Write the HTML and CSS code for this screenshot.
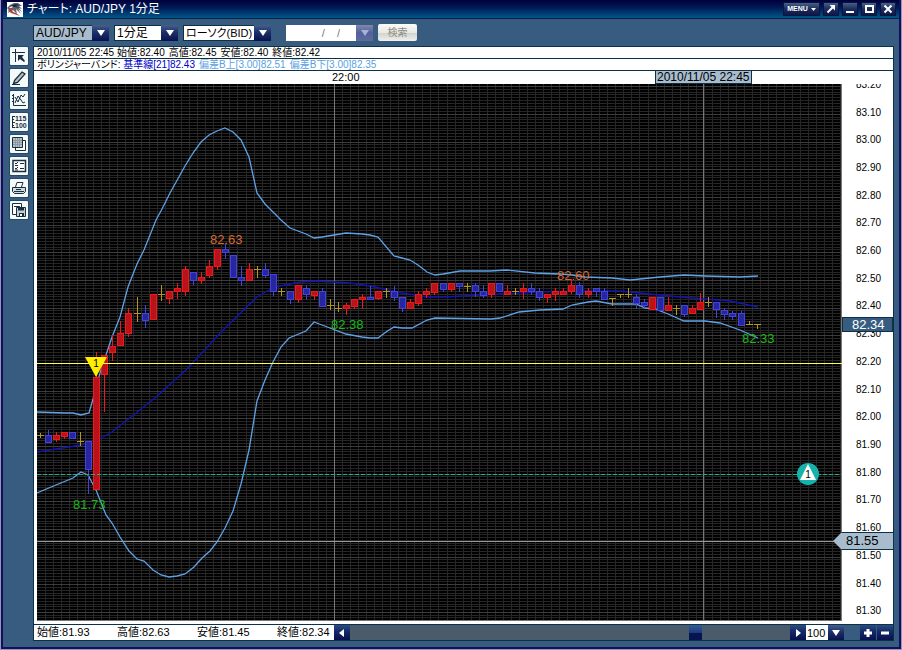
FILE: index.html
```html
<!DOCTYPE html>
<html lang="ja">
<head>
<meta charset="utf-8">
<title>チャート: AUD/JPY 1分足</title>
<link rel="stylesheet" href="styles.css">
</head>
<body>
<div class="window">
  <header class="titlebar">
    <svg class="logo" viewBox="0 0 16 15" aria-hidden="true">
      <rect width="16" height="15" fill="#fff"/>
      <path d="M0 6 3 3 7 1l4 0 4 3-3 0 3 3-3-1 3 4-4-3 3 5-5-5 1 5-4-4-2 1-3 2 1-3z" fill="#5b6672"/>
      <path d="M3 4 8 2l5 1-4 1 4 2-5-1-3 0z" fill="#232a36"/>
      <path d="M1 8l3-2 3 1-2 1 1 2 3 1 4 3-6-2-3-1z" fill="#a8433f"/>
      <path d="M2 6l3-2 1 1-2 1z" fill="#fff"/>
    </svg>
    <h1>チャート: AUD/JPY 1分足</h1>
    <div class="window-buttons">
      <button class="chrome menu" type="button">MENU<svg viewBox="0 0 5 3" width="5" height="3" aria-hidden="true"><path d="M0 0h5L2.500 3z" fill="#fff"/></svg></button>
      <button class="chrome" type="button" aria-label="切り離し"><svg viewBox="0 0 14 12" aria-hidden="true"><path d="M3.500 9.500 9 4" stroke="#fff" stroke-width="2"/><path d="M5.500 2H11v5.500z" fill="#fff"/></svg></button>
      <button class="chrome" type="button" aria-label="最小化"><svg viewBox="0 0 14 12" aria-hidden="true"><path d="M3 8h8v2H3z" fill="#fff"/></svg></button>
      <button class="chrome" type="button" aria-label="最大化"><svg viewBox="0 0 14 12" aria-hidden="true"><path d="M4 3h7v6H4z" fill="none" stroke="#fff" stroke-width="2"/></svg></button>
      <button class="chrome" type="button" aria-label="閉じる"><svg viewBox="0 0 14 12" aria-hidden="true"><path d="m3.500 2.500 7 7m0-7-7 7" stroke="#fff" stroke-width="2"/></svg></button>
    </div>
  </header>

  <form class="controls">
    <label class="picker pair"><select aria-label="通貨ペア"><option>AUD/JPY</option></select><span class="drop"></span></label>
    <label class="picker span"><select aria-label="足種"><option>1分足</option></select><span class="drop"></span></label>
    <label class="picker style"><select aria-label="チャート種類"><option>ローソク(BID)</option></select><span class="drop"></span></label>
    <div class="date">
      <input type="text" aria-label="日付" value="/    /" disabled>
      <button class="drop faded" type="button" aria-label="カレンダー" disabled></button>
    </div>
    <button class="search" type="button" disabled>検索</button>
  </form>

  <main class="body">
    <nav class="tools" aria-label="描画ツール">
      <button type="button" aria-label="カーソル"><svg viewBox="0 0 18 18"><path d="M2 5.500h13M5.500 2v13" stroke="#17303f" fill="none"/><path d="M8 8h6l-2 2 3 4-1 1-4-3-2 2z" fill="#17303f"/></svg></button>
      <button type="button" aria-label="描画"><svg viewBox="0 0 18 18"><path d="M4.500 11.500 12 3l3 2-7.500 8.500-4 1z" fill="#b4c0c8" stroke="#17303f" stroke-width="1.300"/><path d="M2 15.500h8" stroke="#17303f"/></svg></button>
      <button type="button" aria-label="テクニカル"><svg viewBox="0 0 18 18"><path d="M3.500 3v11.500H16M2 4.500h2M2 7.500h2M2 10.500h2" stroke="#17303f" fill="none"/><path d="m5 12 3-7 3 4 2 3 2-1M5 6l3 5 3-7 2 2 2-3" stroke="#17303f" fill="none"/></svg></button>
      <button type="button" aria-label="価格目盛"><svg viewBox="0 0 18 18"><path d="M2.500 3v12M2 3.500h3M2 6.500h2M2 9.500h3M2 12.500h2M2 14.500h3" stroke="#17303f" fill="none"/><text x="5" y="8">115</text><text x="5" y="15">100</text></svg></button>
      <button type="button" aria-label="重ね表示"><svg viewBox="0 0 18 18"><path d="M5.500 5.500h10v10h-10z" fill="#fff" stroke="#17303f"/><path d="M2.500 2.500h10v10h-10z" fill="#b9c3c9" stroke="#17303f"/><path d="M3 5.500h9M3 7.500h9M3 9.500h9M5.500 3v9M7.500 3v9M9.500 3v9" stroke="#8b99a2"/></svg></button>
      <button type="button" aria-label="設定"><svg viewBox="0 0 18 18"><path d="M3 3.500h12.500v11H3z" fill="#fff" stroke="#17303f" stroke-width="1.500"/><path d="m5 6 1 1 2-2M5 11l1 1 2-2M10 6.500h4M10 11.500h4M5 8.500h3M5 13h3" stroke="#17303f" fill="none"/></svg></button>
      <button type="button" aria-label="印刷"><svg viewBox="0 0 18 18"><path d="M5.500 8 7 3.500h6L11.500 8" fill="#fff" stroke="#17303f"/><path d="M2.500 8.500h13v4l-2 2h-9l-2-2z" fill="#d4dbe0" stroke="#17303f"/><path d="M4 12.500h10M6 10.500h5" stroke="#17303f"/></svg></button>
      <button type="button" aria-label="保存"><svg viewBox="0 0 18 18"><path d="M2.500 2.500h9v11h-9zM4 5.500h6" fill="#fff" stroke="#17303f"/><path d="M6.500 6.500h9v9h-9z" fill="#c4ced4" stroke="#17303f"/><path d="M8 6.500h6v3H8zM9 12h5v3H9z" fill="#17303f"/><path d="M10 13h2v2h-2z" fill="#fff"/></svg></button>
    </nav>

    <section class="panel">
      <p class="info">2010/11/05 22:45 <span>始値:82.40</span><span>高値:82.45</span><span>安値:82.40</span><span>終値:82.42</span></p>
      <p class="info">ボリンジャーバンド: <span class="base">基準線[21]82.43</span><span class="band">偏差B上[3.00]82.51</span><span class="band">偏差B下[3.00]82.35</span></p>
      <div class="chart">
        <div class="times">
          <span class="hour">22:00</span>
          <time class="cursor-time">2010/11/05 22:45</time>
        </div>
        <svg class="plot" id="plot" viewBox="37 84 805 537" role="img" aria-label="AUD/JPY ローソク足">
          <rect x="37" y="84" width="805" height="537" fill="#000"/>
        </svg>
        <div class="scale">
          <ol class="prices" id="prices"></ol>
          <output class="last">82.34</output>
          <output class="pointer">81.55</output>
        </div>
      </div>
      <footer class="status">
        <div class="values"><span>始値:81.93</span><span>高値:82.63</span><span>安値:81.45</span><span>終値:82.34</span></div>
        <button class="step" type="button" aria-label="前へ"><svg viewBox="0 0 16 15"><path d="M10 4v8L5 8z" fill="#fff"/></svg></button>
        <input class="scroll" type="range" aria-label="表示位置" min="0" max="1000" value="794">
        <button class="step" type="button" aria-label="次へ"><svg viewBox="0 0 16 15"><path d="M6 4v8l5-4z" fill="#fff"/></svg></button>
        <label class="picker count"><select aria-label="表示本数"><option>100</option></select><span class="drop"></span></label>
        <button class="step zoom" type="button" aria-label="拡大"><svg viewBox="0 0 16 15"><path d="M8 4v8M4 8h8" stroke="#fff" stroke-width="3"/></svg></button>
        <button class="step" type="button" aria-label="縮小"><svg viewBox="0 0 16 15"><path d="M4 8h8" stroke="#fff" stroke-width="3"/></svg></button>
      </footer>
    </section>
  </main>
</div>
<script src="chart.js"></script>
</body>
</html>
```
FILE: styles.css
```css
* { box-sizing: border-box; }

body {
  margin: 0;
  background: #385c80;
  color: #000;
  font: 11px/15px "Liberation Sans", "Noto Sans CJK JP", sans-serif;
  font-feature-settings: "palt";
}

button, select, input { font: inherit; color: inherit; margin: 0; padding: 0; border: 0; border-radius: 0; }
p, h1, ol { margin: 0; padding: 0; }
svg { display: block; }

.window {
  border: 1px solid #9496bc;
  border-top: 0;
  box-shadow: inset 2px 0 #10105c, inset -2px 0 #10105c, inset 0 -2px #10105c;
  padding: 0 2px 2px;
  background: #385c80;
}

/* title bar */
.titlebar {
  display: flex;
  align-items: center;
  height: 19px;
  padding: 0 4px;
  border-bottom: 1px solid #06204c;
  background: linear-gradient(#00003c, #001c58 45%, #005888);
  color: #fff;
}
.logo { width: 16px; height: 15px; }
.titlebar h1 { flex: 1; margin-left: 4px; font-size: 12px; font-weight: 400; line-height: 18px; }
.window-buttons { display: flex; gap: 5px; }
.chrome {
  width: 14px;
  height: 12px;
  background: linear-gradient(#456088, #1c2c5c 50%, #0c1848);
  box-shadow: 0 0 0 1px #0a1440;
}
.menu {
  display: flex;
  align-items: center;
  justify-content: center;
  gap: 3px;
  width: 35px;
  font-size: 7px;
  font-weight: 700;
  line-height: 12px;
}

/* controls row */
.controls { display: flex; align-items: center; gap: 5px; height: 27px; padding-left: 30px; }
.picker { display: grid; height: 16px; }
.picker > * { grid-area: 1 / 1; }
.picker select {
  appearance: none;
  width: 100%;
  padding-left: 2px;
  border: 1px solid #0c3048;
  background: #fff;
  font-size: 12px;
  line-height: 14px;
}
.drop {
  display: grid;
  place-items: center;
  justify-self: end;
  width: 17px;
  height: 16px;
  background: linear-gradient(#44608c, #1c2f6c 45%, #08124c);
  pointer-events: none;
}
.drop::after {
  content: "";
  border: solid transparent;
  border-width: 6px 4px 0;
  border-top-color: #fff;
}
.pair { width: 76px; }
.pair select { background: #a9bccd; }
.span { width: 64px; }
.style { width: 88px; }
.picker.style select { font-size: 11px; }
.date { display: flex; margin-left: 10px; }
.date input { width: 70px; height: 16px; padding-right: 16px; background: #fff; color: #777; text-align: right; white-space: pre; }
.faded { background: linear-gradient(#8088ac, #52609c 50%, #5c6c9c); }
.faded::after { border-top-color: #a4b4d4; }
.search {
  width: 39px;
  height: 17px;
  border-radius: 2px;
  background: linear-gradient(#fafafa, #e8e8e4 50%, #d2d2cc 52%, #f0f0ec);
  color: #8c8c84;
  font-size: 10px;
}

/* tools and chart panel */
.body { display: flex; gap: 5px; padding: 0 5px 6px 7px; }
.tools { display: flex; flex-direction: column; gap: 4px; padding-top: 1px; }
.tools button { width: 18px; height: 18px; border-radius: 1px; background: #f6f9fa; box-shadow: 0 0 0 1px #234a68; }
.tools text { font: 700 7px "Liberation Sans", sans-serif; fill: #17303f; }

.panel { flex: 1; min-width: 0; border: 1px solid #0c3048; background: #fff; }
.info { height: 12px; padding-left: 3px; border-bottom: 1px solid #0c3048; font-size: 10px; line-height: 11px; white-space: nowrap; overflow: hidden; }
.info span { margin-right: 4px; }
.info .base { color: #0000c8; }
.info .band { color: #5a9fe0; }

.chart {
  display: grid;
  grid-template-columns: 1fr 51px;
  grid-template-rows: 13px auto;
  padding: 0 0 3px 3px;
}
.times { grid-column: 1 / 3; position: relative; line-height: 13px; }
.hour { position: absolute; left: 295px; }
.cursor-time {
  position: absolute;
  left: 618px;
  padding: 0 1px;
  border: 1px solid #0c3048;
  border-top: 0;
  background: #a9bccd;
  font-size: 12px;
  line-height: 12px;
}
.plot { width: 100%; height: auto; }
.plot text { font: 13px "Liberation Sans", sans-serif; }
.plot .badge { font-size: 10px; text-anchor: middle; }
.scale { position: relative; }
.prices { position: absolute; inset: 0; overflow: hidden; list-style: none; display: flex; flex-direction: column; }
.prices li { flex: 1 0 0; display: flex; align-items: center; padding-left: 14px; font-size: 10px; line-height: 10px; }
.prices li:first-child { margin-top: -13px; }
.prices li:last-child { margin-bottom: -4px; }
.last, .pointer { position: absolute; right: 0; font-size: 13px; }
.last {
  top: 233px;
  width: 51px;
  height: 15px;
  padding-left: 9px;
  border: 1px solid #0c3048;
  background: #385c80;
  color: #fff;
  line-height: 13px;
}
.pointer {
  top: 448px;
  width: 60px;
  height: 18px;
  padding-left: 13px;
  background: linear-gradient(#0c3048 1px, #a9bccd 1px, #a9bccd 17px, #0c3048 17px);
  clip-path: polygon(0 50%, 9px 0, 100% 0, 100% 100%, 9px 100%);
  line-height: 18px;
}

/* status bar */
.status { display: flex; height: 16px; border-top: 1px solid #0c3048; background: #385c80; }
.values { display: grid; grid-template-columns: repeat(3, 80px) 57px; padding-left: 3px; background: #fff; white-space: nowrap; }
.step { width: 16px; height: 15px; background: linear-gradient(#2c4c80, #142868 45%, #08104c); }
.scroll { appearance: none; flex: 1; min-width: 0; height: 15px; background: #4a5c6c; }
.scroll::-webkit-slider-thumb { appearance: none; width: 13px; height: 15px; background: linear-gradient(#345c94, #1c3c80 50%, #081450 55%); }
.count { width: 38px; height: 15px; }
.picker.count select { padding-left: 1px; border: 0; font-size: 11px; }
.count .drop { width: 16px; height: 15px; }
.zoom { margin: 0 1px 0 16px; }
```
FILE: chart.js
```js
const SVG = "http://www.w3.org/2000/svg";
const plot = document.getElementById("plot");
const LEFT = 37, RIGHT = 842, TOP = 84, BOTTOM = 621;
const STEP = 8.04;

function add(name, attrs, text) {
  const el = document.createElementNS(SVG, name);
  for (const key in attrs) el.setAttribute(key, attrs[key]);
  if (text) el.textContent = text;
  plot.appendChild(el);
}
const priceY = p => 612.4 - (p - 81.3) * 276.7;
const line = (x1, y1, x2, y2, stroke, extra) =>
  add("path", Object.assign({ d: `M${x1} ${y1}L${x2} ${y2}`, stroke, fill: "none" }, extra));

// Grid: one column per bar, one row per 0.01
for (let i = 1; i <= 100; i++) {
  const x = Math.floor(LEFT + i * STEP) + 0.5;
  line(x, TOP, x, BOTTOM, "#262626");
}
for (let t = 8127; t <= 8320; t++) {
  const y = Math.floor(priceY(t / 100)) + 0.5;
  if (y > TOP && y < BOTTOM) line(LEFT, y, RIGHT, y, t % 10 ? "#262626" : "#3c3c3c");
}
line(334.5, TOP, 334.5, BOTTOM, "#777");
line(703.5, TOP, 703.5, BOTTOM, "#777");
line(LEFT, 541.5, RIGHT, 541.5, "#999");
line(841.5, TOP, 841.5, BOTTOM, "#777");
line(LEFT, 620.5, RIGHT, 620.5, "#777");

// Bollinger bands
const bands = [
  ["#5fa3e6", "37,412 65,413 73,413 81,415 89,413 93,399 100,373 106,355 112,337 120,317 128,287 137,264 144,250 156,220 162,209 170,193 185,166 193,153 201,142 209,135 217,131 225,128 233,132 241,140 249,157 257,193 265,204 273,212 281,220 290,228 306,234 314,238 322,237 346,233 362,234 370,235 378,237 394,256 402,258 410,260 418,265 427,272 435,275 443,274 460,271 490,271 507,270 535,273 560,274 572,275 585,277 612,278 630,280 660,277 684,275 705,276 740,277 758,276"],
  ["#1414b4", "37,452 50,450 81,445 95,441 103,437 112,432 131,417 156,397 187,369 223,330 257,297 267,291 280,286 300,282 315,281 350,283 370,286 402,293 427,297 445,297 480,295 540,292 580,291 620,291 650,294 680,297 705,299 730,301 758,307"],
  ["#5fa3e6", "37,493 56,485 73,478 81,472 88,475 96,490 106,515 112,523 120,537 129,551 137,559 144,561 153,570 161,575 169,577 177,576 185,574 194,567 202,558 210,551 217,542 225,528 233,511 241,484 249,450 257,401 265,380 273,362 281,347 289,338 306,331 314,322 322,325 346,334 362,337 370,338 378,338 386,332 394,327 402,328 412,328 427,320 435,318 491,319 500,318 519,312 540,310 563,309 572,305 588,302 596,301 612,304 636,304 645,308 655,309 668,314 684,321 705,321 720,323 740,330 758,338"]
];
for (const [stroke, points] of bands) add("polyline", { points, stroke, fill: "none", "stroke-width": 1.3 });

// Bars: kind (r up, b down, d unchanged), high, body top, body bottom, low
const bars = `d433,435,435,437 b430,435,442,442 r432,435,439,441 r432,432,436,438 b432,432,438,438 d432,441,441,445
b441,441,469,493 r352,377,489,489 r355,355,374,411 r335,346,352,360 r321,333,345,345 r308,313,333,336
d297,313,313,321 b305,313,320,327 r294,294,319,319 d285,294,294,300 r291,291,298,303 r283,288,291,298
r266,269,291,295 b272,272,280,284 r272,277,280,283 r260,266,275,277 r249,249,266,269 b243,249,252,258
b255,255,277,277 b266,277,280,285 r263,269,280,280 d266,269,269,277 b263,269,275,277 b274,274,291,295
d288,291,291,295 b291,291,299,303 r285,285,299,302 b285,288,294,299 r291,291,295,299 b288,291,306,306
d299,305,305,309 d302,308,308,311 r303,305,308,314 r299,299,306,308 r294,297,299,308 b286,297,299,299
r291,291,298,299 d288,291,291,297 b286,291,297,300 b297,297,308,311 r299,302,308,308 r291,294,303,305
r288,291,294,297 r283,283,292,294 b283,283,289,291 r283,283,289,291 b283,283,286,291 d283,286,286,291
b283,285,291,296 b285,291,295,297 r283,283,294,297 b283,283,291,291 r285,291,294,294 d288,291,291,294
r283,288,291,298 b283,288,291,294 b288,291,297,300 r294,294,297,302 r288,291,294,300 r288,291,294,294
r279,285,291,293 b282,285,294,297 r288,291,294,297 b288,288,291,296 b288,291,299,299 d298,298,298,305
d294,294,294,297 d288,294,294,297 b294,297,303,308 b299,302,305,307 r297,297,309,309 b297,297,310,310
r297,305,310,310 d305,308,308,314 b305,305,314,316 r305,308,313,313 r293,302,309,309 d297,302,302,306
b302,302,309,317 b308,310,314,319 b311,313,316,319 b311,313,325,325 d321,324,324,324 d324,324,324,328`.split(/\s+/);
const colors = { r: ["#b8121a", "#f01818"], b: ["#2626a0", "#4444dc"], d: ["#b89818", "#b89818"] };
bars.forEach((bar, i) => {
  const [high, top, bottom, low] = bar.slice(1).split(",").map(Number);
  const [fill, edge] = colors[bar[0]];
  const x = Math.floor(40.4 + i * 8.053) + 0.5;
  line(x, high, x, low + 1, edge);
  if (bar[0] === "d") line(x - 3.5, top + 0.5, x + 3.5, top + 0.5, edge);
  else add("rect", { x: x - 3, y: top + 0.5, width: 6, height: bottom - top, fill, stroke: edge });
});

// Order lines and markers
line(LEFT, 363.5, RIGHT, 363.5, "#ffff40");
line(LEFT, 474.5, RIGHT, 474.5, "#18b090", { "stroke-dasharray": "4 2" });
add("path", { d: "M85 357h22L96 377z", fill: "#ffee00" });
add("text", { x: 96, y: 367, class: "badge" }, "1");
add("circle", { cx: 808, cy: 474, r: 11, fill: "#14b4ac" });
add("path", { d: "M808 464l8 16h-16z", fill: "#fff" });
add("text", { x: 808, y: 478, class: "badge" }, "1");

// Highs and lows
const marks = [
  [210, 244, "82.63", "#d86830"], [557, 280, "82.60", "#d86830"],
  [73, 509, "81.73", "#18b818"], [331, 329, "82.38", "#18b818"], [742, 343, "82.33", "#18b818"]
];
for (const [x, y, text, fill] of marks) add("text", { x, y, fill }, text);

// Price scale labels
const prices = document.getElementById("prices");
for (let t = 832; t >= 813; t--) {
  const li = document.createElement("li");
  li.textContent = (t / 10).toFixed(2);
  prices.appendChild(li);
}
```
